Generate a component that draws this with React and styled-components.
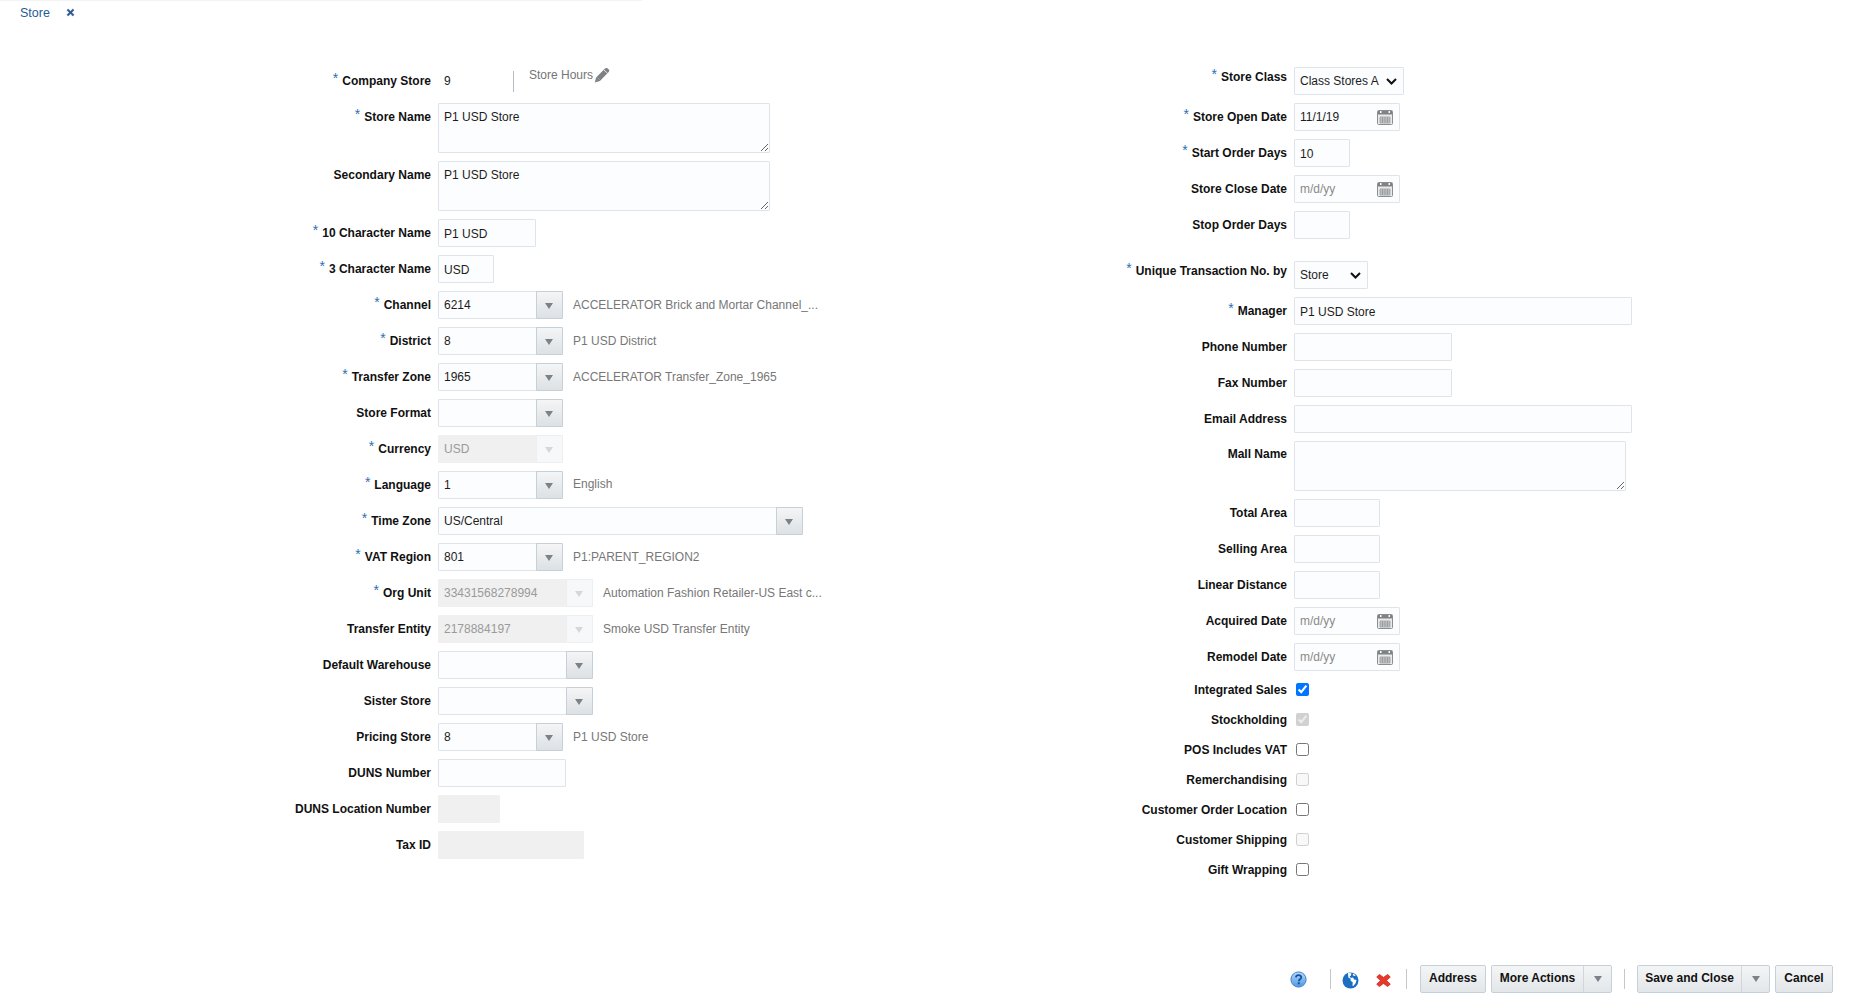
import React from 'react';
import styled, { createGlobalStyle } from 'styled-components';

const GlobalStyle = createGlobalStyle`
  html, body {
    margin: 0;
    padding: 0;
    background: #fff;
  }
  body, input, select, textarea, button {
    font-family: "Liberation Sans", Arial, sans-serif;
    font-size: 12px;
  }
`;

const Page = styled.div`
  display: flex;
  flex-direction: column;
  height: 1002px;
  overflow: hidden;
`;

const TabBar = styled.div`
  display: flex;
  align-items: center;
  gap: 16px;
  width: 642px;
  height: 24px;
  padding-left: 20px;
  border-top: 1px solid #f3f3f3;
  box-sizing: border-box;
`;

const TabTitle = styled.span`
  color: #1f5c99;
  font-size: 12.5px;
`;

const Columns = styled.div`
  display: flex;
  padding: 43px 0 0 280px;
`;

const Column = styled.div`
  display: flex;
  flex-direction: column;
  width: ${(p) => p.$width}px;
  flex: none;
`;

const Row = styled.div`
  display: flex;
  align-items: center;
  gap: 7px;
  min-height: ${(p) => p.$height || 28}px;
  margin-bottom: ${(p) => (p.$tight ? 0 : 8)}px;
  margin-top: ${(p) => p.$above || 0}px;
`;

const Label = styled.label`
  flex: none;
  box-sizing: border-box;
  width: ${(p) => p.$width}px;
  padding-top: ${(p) => p.$drop || 0}px;
  text-align: right;
  font-weight: bold;
  font-size: 12px;
  color: #111;
  white-space: nowrap;
  line-height: 14px;
  ${(p) => (p.$top !== undefined ? `align-self: flex-start; margin-top: ${p.$top}px;` : '')}
`;

const Star = styled.span`
  color: #2b70b4;
  font-weight: normal;
  font-size: 14px;
  line-height: 0;
  margin-right: 4px;
  vertical-align: 2px;
`;

const TextInput = styled.input`
  box-sizing: border-box;
  width: ${(p) => p.$width}px;
  height: 28px;
  padding: 1px 5px 0;
  border: 1px solid ${(p) => (p.disabled ? '#f0f0f0' : '#dfe4ea')};
  border-radius: 1px;
  background: ${(p) => (p.disabled ? '#f0f0f0' : '#fcfdfe')};
  color: #1c1c1c;
  outline: none;
`;

const TextArea = styled.textarea`
  box-sizing: border-box;
  display: block;
  width: ${(p) => p.$width}px;
  height: 50px;
  padding: 6px 5px 4px;
  border: 1px solid #dfe4ea;
  border-radius: 1px;
  background: #fcfdfe;
  color: #1c1c1c;
  outline: none;
`;

const chevron = encodeURIComponent(
  '<svg xmlns="http://www.w3.org/2000/svg" width="11" height="7" viewBox="0 0 11 7"><path d="M1 1l4.5 4.5L10 1" fill="none" stroke="#111" stroke-width="2"/></svg>'
);

const PlainSelect = styled.select`
  appearance: none;
  box-sizing: border-box;
  width: ${(p) => p.$width}px;
  height: 28px;
  padding: 0 0 0 5px;
  border: 1px solid #dfe4ea;
  border-radius: 1px;
  background: #fcfdfe url("data:image/svg+xml,${chevron}") no-repeat right 6px center;
  color: #1c1c1c;
  outline: none;
`;

const ComboBox = styled.div`
  display: flex;
  flex: none;
  box-sizing: border-box;
  width: ${(p) => p.$width}px;
  height: 28px;
  border: 1px solid ${(p) => (p.$off ? '#f0f0f0' : '#dfe4ea')};
  border-radius: 1px;
  background: ${(p) => (p.$off ? '#f0f0f0' : '#fcfdfe')};
`;

const ComboValue = styled.span`
  flex: 1;
  padding-left: 5px;
  line-height: 26px;
  color: ${(p) => (p.$off ? '#9a9a9a' : '#1c1c1c')};
`;

const ComboButton = styled.span`
  display: flex;
  align-items: center;
  justify-content: center;
  width: 27px;
  margin: -1px -1px -1px 0;
  padding-right: 2px;
  box-sizing: border-box;
  border: 1px solid ${(p) => (p.$off ? '#eceff1' : '#c6d0d8')};
  background: ${(p) =>
    p.$off ? '#f7f8f9' : 'linear-gradient(#f4f5f6, #dde1e4)'};
  border-radius: 0 1px 1px 0;
`;

const Triangle = styled.span`
  width: 0;
  height: 0;
  margin-top: 2px;
  border-left: 4.5px solid transparent;
  border-right: 4.5px solid transparent;
  border-top: 6px solid ${(p) => (p.$off ? '#d5d8da' : '#7b8288')};
`;

const Description = styled.span`
  margin-left: 3px;
  color: #777;
  font-size: 12px;
  white-space: nowrap;
  position: relative;
  top: ${(p) => p.$shift || 0}px;
`;

const StaticValue = styled.span`
  width: 62px;
  padding-left: 6px;
  color: #1c1c1c;
`;

const HoursDivider = styled.span`
  width: 1px;
  height: 21px;
  background: #b5bdc6;
`;

const HoursLink = styled.span`
  display: flex;
  align-items: center;
  gap: 1px;
  margin: -12px 0 0 8px;
  color: #757575;
`;

const DateBox = styled.div`
  display: flex;
  align-items: center;
  justify-content: space-between;
  box-sizing: border-box;
  width: 106px;
  height: 28px;
  padding: 0 6px 0 5px;
  border: 1px solid #dfe4ea;
  border-radius: 1px;
  background: #fcfdfe;
  color: ${(p) => (p.$empty ? '#8a8a8a' : '#1c1c1c')};
`;

const CheckBox = styled.input`
  width: 13px;
  height: 13px;
  margin: 0 0 0 2px;
  accent-color: #0075ff;
`;

const Footer = styled.div`
  display: flex;
  align-items: center;
  height: 28px;
  margin-top: auto;
  margin-bottom: 9px;
  padding: 0 20px 0 1290px;
`;

const IconSlot = styled.span`
  display: flex;
  flex: none;
  width: ${(p) => p.$width}px;
  margin-left: ${(p) => p.$left || 0}px;
  position: relative;
  top: ${(p) => p.$shift || 0}px;
`;

const Divider = styled.span`
  flex: none;
  width: 1px;
  height: 20px;
  margin-left: ${(p) => p.$left}px;
  background: #c3c8cd;
`;

const ActionButton = styled.span`
  display: flex;
  flex: none;
  align-items: center;
  box-sizing: border-box;
  width: ${(p) => p.$width}px;
  height: 28px;
  margin-left: ${(p) => p.$left}px;
  border: 1px solid #c6d0d8;
  border-radius: 2px;
  background: linear-gradient(#f3f5f6, #e3e6e9);
  color: #111;
  font-weight: bold;
`;

const ActionText = styled.span`
  flex: 1;
  padding-bottom: 2px;
  text-align: center;
`;

const ActionArrow = styled.span`
  display: flex;
  align-items: center;
  justify-content: center;
  width: 27px;
  height: 100%;
  border-left: 1px solid #cfd6dc;
  ${Triangle} {
    margin-top: 0;
  }
`;

const PencilIcon = () => (
  <svg width="16" height="16" viewBox="0 0 16 16">
    <path d="M.8 15.6l1.3-5.2L11 1.6c.9-.9 1.7-.9 2.4-.3l1.4 1.3c.7.7.7 1.5-.1 2.4l-8.8 9z" fill="#7f8184" />
    <path d="M10 3l3.6 3.4" stroke="#fff" strokeWidth=".8" fill="none" />
    <path d="M3.4 10.6l2.4 2.3" stroke="#a9abad" strokeWidth=".8" fill="none" />
  </svg>
);

const CloseIcon = () => (
  <svg width="9" height="9" viewBox="0 0 9 9">
    <path d="M1 2.2L2.2 1 4.5 3.2 6.8 1 8 2.2 5.8 4.5 8 6.8 6.8 8 4.5 5.8 2.2 8 1 6.8 3.2 4.5z" fill="#2c5a90" stroke="#2c5a90" strokeWidth=".5" />
  </svg>
);

const CalendarIcon = () => (
  <svg width="16" height="15" viewBox="0 0 16 15">
    <rect x=".5" y=".5" width="15" height="14" rx="1" fill="#e9ebec" stroke="#8b8e91" />
    <rect x="1" y="1" width="14" height="3.5" fill="#808386" />
    <rect x="3" y="1" width="1.5" height="2" fill="#fff" />
    <rect x="11.5" y="1" width="1.5" height="2" fill="#fff" />
    <path d="M3 7h10v6H3zM3 9h10M3 11h10M5.5 7v6M8 7v6M10.5 7v6" fill="#cfd2d4" stroke="#8f9295" strokeWidth=".7" />
  </svg>
);

const HelpIcon = () => (
  <svg width="17" height="17" viewBox="0 0 17 17">
    <defs>
      <linearGradient id="helpFill" x1="0" y1="0" x2="0" y2="1">
        <stop offset="0" stopColor="#b9d9f7" />
        <stop offset="1" stopColor="#4b96e4" />
      </linearGradient>
    </defs>
    <circle cx="8.5" cy="8.5" r="7.6" fill="url(#helpFill)" stroke="#3b82cc" />
    <path d="M5.9 6.4c.2-3 5.4-3 5.4-.1 0 2-2.5 1.8-2.5 4" fill="none" stroke="#14529e" strokeWidth="1.8" />
    <rect x="7.8" y="11.3" width="2" height="2" fill="#14529e" />
  </svg>
);

const GlobeIcon = () => (
  <svg width="17" height="17" viewBox="0 0 17 17">
    <circle cx="8.5" cy="8.5" r="8" fill="#1a6fc0" />
    <path d="M6 .9l3.4.3-.5 2.3-1.4 1.1 1.3 1.4 2.1-.6 1.3 2 2.3.6-.9 3.3-2.3 2.7-.9-.6.4-3-2.1-1.6-.2-2.2-2-.8-.4-2.4zM11.2 1.6l2.6 1.9-1.7.6-1.4-1.2z" fill="#fff" />
  </svg>
);

const DeleteIcon = () => (
  <svg width="15" height="13" viewBox="0 0 15 13">
    <path d="M.7 3L3.4.4l4.1 3L11.6.4 14.3 3l-3.8 3.5 3.8 3.7-2.7 2.4-4.1-3.2-4.1 3.2L.7 10.2l3.8-3.7z" fill="#e8382a" stroke="#b92015" strokeWidth=".7" />
  </svg>
);

const Field = ({ width, label, required, top, drop, children, ...rest }) => (
  <Row {...rest}>
    <Label $width={width} $top={top} $drop={drop}>
      {required && <Star>*</Star>}
      {label}
    </Label>
    {children}
  </Row>
);

const Combo = ({ width = 125, value, off, note, shift }) => (
  <>
    <ComboBox $width={width} $off={off}>
      <ComboValue $off={off}>{value}</ComboValue>
      <ComboButton $off={off}>
        <Triangle $off={off} />
      </ComboButton>
    </ComboBox>
    {note && <Description $shift={shift}>{note}</Description>}
  </>
);

const DateField = ({ value }) => (
  <DateBox $empty={!value}>
    {value || 'm/d/yy'}
    <CalendarIcon />
  </DateBox>
);

const LEFT = 151;
const RIGHT = 177;

const checks = [
  { label: 'Integrated Sales', checked: true },
  { label: 'Stockholding', checked: true, disabled: true },
  { label: 'POS Includes VAT' },
  { label: 'Remerchandising', disabled: true },
  { label: 'Customer Order Location' },
  { label: 'Customer Shipping', disabled: true },
  { label: 'Gift Wrapping' },
];

const App = () => (
  <Page>
    <GlobalStyle />
    <TabBar>
      <TabTitle>Store</TabTitle>
      <CloseIcon />
    </TabBar>
    <Columns>
      <Column $width={830}>
        <Field width={LEFT} label="Company Store" required>
          <StaticValue>9</StaticValue>
          <HoursDivider />
          <HoursLink>
            Store Hours
            <PencilIcon />
          </HoursLink>
        </Field>
        <Field width={LEFT} label="Store Name" required top={7} $height={50}>
          <TextArea $width={332} defaultValue="P1 USD Store" />
        </Field>
        <Field width={LEFT} label="Secondary Name" top={7} $height={50}>
          <TextArea $width={332} defaultValue="P1 USD Store" />
        </Field>
        <Field width={LEFT} label="10 Character Name" required>
          <TextInput $width={98} defaultValue="P1 USD" />
        </Field>
        <Field width={LEFT} label="3 Character Name" required>
          <TextInput $width={56} defaultValue="USD" />
        </Field>
        <Field width={LEFT} label="Channel" required>
          <Combo value="6214" note="ACCELERATOR Brick and Mortar Channel_..." />
        </Field>
        <Field width={LEFT} label="District" required>
          <Combo value="8" note="P1 USD District" />
        </Field>
        <Field width={LEFT} label="Transfer Zone" required>
          <Combo value="1965" note="ACCELERATOR Transfer_Zone_1965" />
        </Field>
        <Field width={LEFT} label="Store Format">
          <Combo />
        </Field>
        <Field width={LEFT} label="Currency" required>
          <Combo value="USD" off />
        </Field>
        <Field width={LEFT} label="Language" required>
          <Combo value="1" note="English" shift={-1} />
        </Field>
        <Field width={LEFT} label="Time Zone" required>
          <Combo width={365} value="US/Central" />
        </Field>
        <Field width={LEFT} label="VAT Region" required>
          <Combo value="801" note="P1:PARENT_REGION2" />
        </Field>
        <Field width={LEFT} label="Org Unit" required>
          <Combo width={155} value="33431568278994" off note="Automation Fashion Retailer-US East c..." />
        </Field>
        <Field width={LEFT} label="Transfer Entity">
          <Combo width={155} value="2178884197" off note="Smoke USD Transfer Entity" />
        </Field>
        <Field width={LEFT} label="Default Warehouse">
          <Combo width={155} />
        </Field>
        <Field width={LEFT} label="Sister Store">
          <Combo width={155} />
        </Field>
        <Field width={LEFT} label="Pricing Store">
          <Combo value="8" note="P1 USD Store" />
        </Field>
        <Field width={LEFT} label="DUNS Number">
          <TextInput $width={128} />
        </Field>
        <Field width={LEFT} label="DUNS Location Number">
          <TextInput $width={62} disabled />
        </Field>
        <Field width={LEFT} label="Tax ID">
          <TextInput $width={146} disabled />
        </Field>
      </Column>
      <Column $width={560}>
        <Field width={RIGHT} label="Store Class" required top={3}>
          <PlainSelect $width={110} defaultValue="A">
            <option value="A">Class Stores A</option>
          </PlainSelect>
        </Field>
        <Field width={RIGHT} label="Store Open Date" required>
          <DateField value="11/1/19" />
        </Field>
        <Field width={RIGHT} label="Start Order Days" required>
          <TextInput $width={56} defaultValue="10" />
        </Field>
        <Field width={RIGHT} label="Store Close Date">
          <DateField />
        </Field>
        <Field width={RIGHT} label="Stop Order Days">
          <TextInput $width={56} />
        </Field>
        <Field width={RIGHT} label="Unique Transaction No. by" required top={3} $above={14}>
          <PlainSelect $width={74} defaultValue="S">
            <option value="S">Store</option>
          </PlainSelect>
        </Field>
        <Field width={RIGHT} label="Manager" required>
          <TextInput $width={338} defaultValue="P1 USD Store" />
        </Field>
        <Field width={RIGHT} label="Phone Number">
          <TextInput $width={158} />
        </Field>
        <Field width={RIGHT} label="Fax Number">
          <TextInput $width={158} />
        </Field>
        <Field width={RIGHT} label="Email Address">
          <TextInput $width={338} />
        </Field>
        <Field width={RIGHT} label="Mall Name" top={6} $height={50}>
          <TextArea $width={332} />
        </Field>
        <Field width={RIGHT} label="Total Area">
          <TextInput $width={86} />
        </Field>
        <Field width={RIGHT} label="Selling Area">
          <TextInput $width={86} />
        </Field>
        <Field width={RIGHT} label="Linear Distance">
          <TextInput $width={86} />
        </Field>
        <Field width={RIGHT} label="Acquired Date">
          <DateField />
        </Field>
        <Field width={RIGHT} label="Remodel Date" $tight>
          <DateField />
        </Field>
        <Row $height={3} $tight />
        {checks.map((c) => (
          <Field key={c.label} width={RIGHT} label={c.label} drop={2} $height={30} $tight>
            <CheckBox type="checkbox" defaultChecked={c.checked} disabled={c.disabled} />
          </Field>
        ))}
      </Column>
    </Columns>
    <Footer>
      <IconSlot $width={17}><HelpIcon /></IconSlot>
      <Divider $left={23} />
      <IconSlot $width={17} $left={11} $shift={1}><GlobeIcon /></IconSlot>
      <IconSlot $width={15} $left={17} $shift={1}><DeleteIcon /></IconSlot>
      <Divider $left={15} />
      <ActionButton $width={66} $left={13}><ActionText>Address</ActionText></ActionButton>
      <ActionButton $width={121} $left={5}>
        <ActionText>More Actions</ActionText>
        <ActionArrow><Triangle /></ActionArrow>
      </ActionButton>
      <Divider $left={12} />
      <ActionButton $width={133} $left={12}>
        <ActionText>Save and Close</ActionText>
        <ActionArrow><Triangle /></ActionArrow>
      </ActionButton>
      <ActionButton $width={58} $left={5}><ActionText>Cancel</ActionText></ActionButton>
    </Footer>
  </Page>
);

export default App;
